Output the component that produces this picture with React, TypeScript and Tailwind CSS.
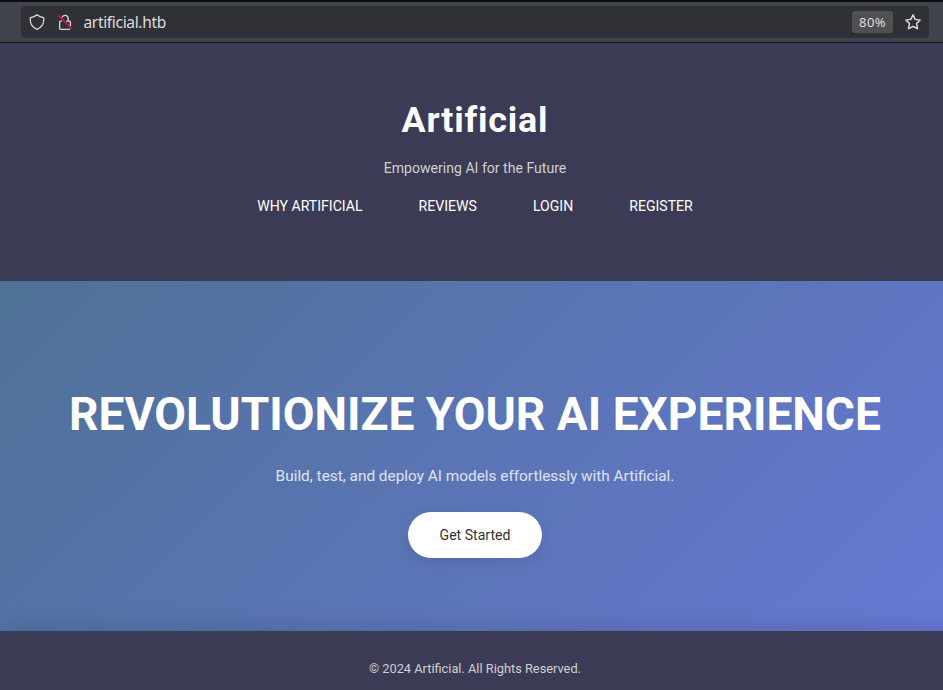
const navItems = ["WHY ARTIFICIAL", "REVIEWS", "LOGIN", "REGISTER"];

function BrowserBar() {
  return (
    <div className="h-[43px] shrink-0 border-t-2 border-b border-[#0c0c12] bg-[#42444c] pt-1 pr-3.5 pl-[21px] font-['Noto_Sans',sans-serif]">
      <div className="flex h-8 items-center rounded bg-[#303136] pr-2 pl-2 text-[#dcdcde]">
        <svg className="size-4 shrink-0" viewBox="0 0 16 16" fill="none" stroke="#d8d8da" strokeWidth="1.3" strokeLinejoin="round">
          <path d="M8 .8C9.8 2.3 12 3.2 14.7 3.6V6.5C14.6 10.5 12 13.6 8 15.4 4 13.6 1.4 10.5 1.3 6.5V3.6C4 3.2 6.2 2.3 8 .8Z" />
        </svg>
        <svg className="ml-3 size-4 shrink-0" viewBox="0 0 16 16" fill="none" stroke="#d8d8da" strokeWidth="1.3">
          <path d="M5 3.4a3.2 3.2 0 0 1 6.2 1V7.1h1.2a1 1 0 0 1 1 1v3.8M4.8 7.1H3.6a1 1 0 0 0-1 1v6.2a1 1 0 0 0 1 1h9.4M9.2 7.1h2" />
          <path d="M1.2 1.2 14.8 14.8" stroke="#e4143c" strokeWidth="1.5" />
        </svg>
        <span className="ml-[10.5px] text-[15.5px] leading-5 tracking-[-0.33px]">artificial.htb</span>
        <span className="mr-3 ml-auto flex h-[22px] w-[41px] items-center justify-center rounded-[3px] bg-[#4f4f54] text-[13px] leading-4 tracking-[0.4px]">80%</span>
        <svg className="size-4 shrink-0" viewBox="0 0 16 16" fill="none" stroke="#e2e2e4" strokeWidth="1.4" strokeLinejoin="round">
          <path d="M8 .9 10.2 5.4 15.2 6.1 11.6 9.6 12.5 14.7 8 12.3 3.5 14.7 4.4 9.6.8 6.1 5.8 5.4Z" />
        </svg>
      </div>
    </div>
  );
}

export default function App() {
  return (
    <div className="flex h-[690px] w-full flex-col overflow-hidden bg-[#3c3b56] font-[Roboto,sans-serif] text-white">
      <BrowserBar />
      <div className="flex w-[950px] flex-1 flex-col text-center whitespace-nowrap">
        <header className="flex h-[238px] shrink-0 flex-col items-center bg-[#3c3b56] pt-[54px]">
          <h1 className="text-[35.84px] leading-[46px] font-bold tracking-[0.8px]">Artificial</h1>
          <p className="mt-[14px] text-[14.08px] leading-[22px] text-[#d0d0d0]">Empowering AI for the Future</p>
          <nav className="mt-4 flex gap-14 text-[14.08px] leading-[22px]">
            {navItems.map((label) => (
              <a key={label} href="#">
                {label}
              </a>
            ))}
          </nav>
        </header>
        <section className="flex h-[350px] shrink-0 flex-col items-center bg-[linear-gradient(135deg,#4e7195,#6778d4)] pt-[103px]">
          <h2 className="text-[46.08px] leading-[60px] font-bold">REVOLUTIONIZE YOUR AI EXPERIENCE</h2>
          <p className="mt-[19px] text-[15.36px] leading-[26px] text-white/80">Build, test, and deploy AI models effortlessly with Artificial.</p>
          <a href="#" className="mt-[23px] flex h-[46px] w-[134px] items-center justify-center rounded-full bg-white pt-px text-[14.08px] text-[#333] shadow-[0_4px_16px_rgba(0,0,0,0.09)]">
            Get Started
          </a>
        </section>
        <footer className="z-10 flex h-[59px] justify-center bg-[#3c3b56] pt-[27px] text-[12.8px] leading-[22px] text-[#d0d0d0] shadow-[0_-4px_24px_rgba(0,0,0,0.12)]">
          © 2024 Artificial. All Rights Reserved.
        </footer>
      </div>
    </div>
  );
}
